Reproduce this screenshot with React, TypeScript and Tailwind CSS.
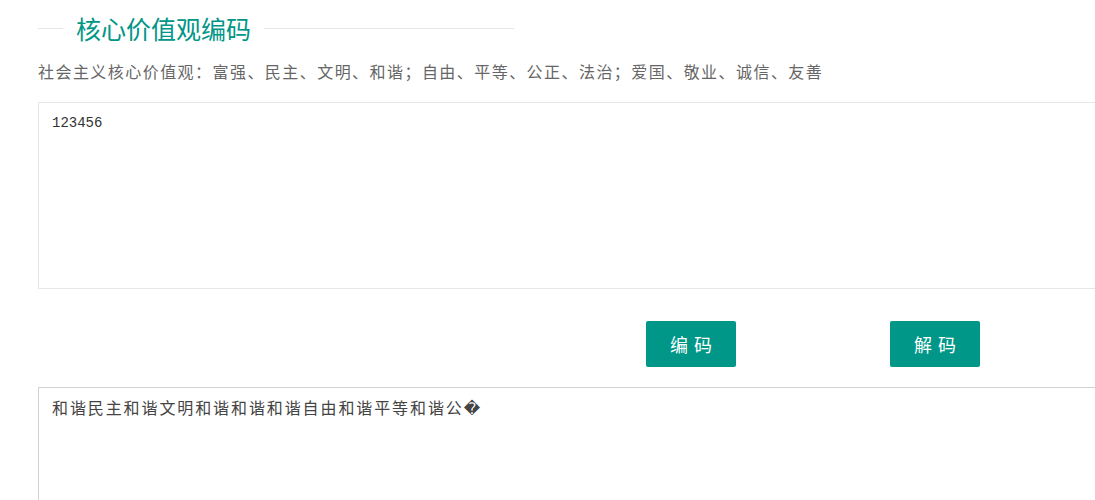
import React from "react";

const CJK = "font-['Microsoft_YaHei','Noto_Sans_CJK_SC',sans-serif]";

/* -------------------- Title -------------------- */

const SectionTitle: React.FC<{ title: string }> = ({ title }) => (
  <div className="flex items-center h-[38px] mt-[9px]">
    <div className="w-[25px] h-px bg-[#e6e6e6]" />
    <h2 className={`mx-[13px] text-[25px] leading-none text-[#009688] font-normal ${CJK}`}>
      {title}
    </h2>
    <div className="w-[250px] h-px bg-[#e6e6e6]" />
  </div>
);

/* -------------------- Button -------------------- */

const ActionButton: React.FC<{ label: string }> = ({ label }) => (
  <button
    type="button"
    className={`w-[90px] h-[46px] rounded-[2px] bg-[#009688] text-white text-[18px] tracking-[6px] pl-[6px] ${CJK}`}
  >
    {label}
  </button>
);

/* -------------------- Main -------------------- */

export default function App() {
  return (
    <div className="w-[1095px] h-[500px] overflow-hidden bg-white">
      <div className="pl-[38px]">
        <SectionTitle title="核心价值观编码" />

        <p className={`mt-[12px] text-[16px] leading-[24px] text-[#666] tracking-[1.45px] ${CJK}`}>
          社会主义核心价值观：富强、民主、文明、和谐；自由、平等、公正、法治；爱国、敬业、诚信、友善
        </p>

        <textarea
          readOnly
          defaultValue="123456"
          className="block mt-[19px] w-[1100px] h-[187px] border border-[#e6e6e6] pl-[13px] pt-[10px] text-[14px] leading-[20px] text-[#333] resize-none outline-none font-['Liberation_Mono','Noto_Sans_CJK_SC',monospace]"
        />

        <div className="flex mt-[32px] pl-[608px] gap-[154px]">
          <ActionButton label="编码" />
          <ActionButton label="解码" />
        </div>

        <textarea
          readOnly
          defaultValue="和谐民主和谐文明和谐和谐和谐自由和谐平等和谐公�"
          className="block mt-[20px] w-[1100px] h-[150px] border border-[#d2d2d2] pl-[13px] pt-[11px] text-[16px] leading-[22px] tracking-[1.9px] text-[#444] resize-none outline-none font-['Liberation_Mono','Noto_Sans_CJK_SC','DejaVu_Sans',monospace]"
        />
      </div>
    </div>
  );
}
